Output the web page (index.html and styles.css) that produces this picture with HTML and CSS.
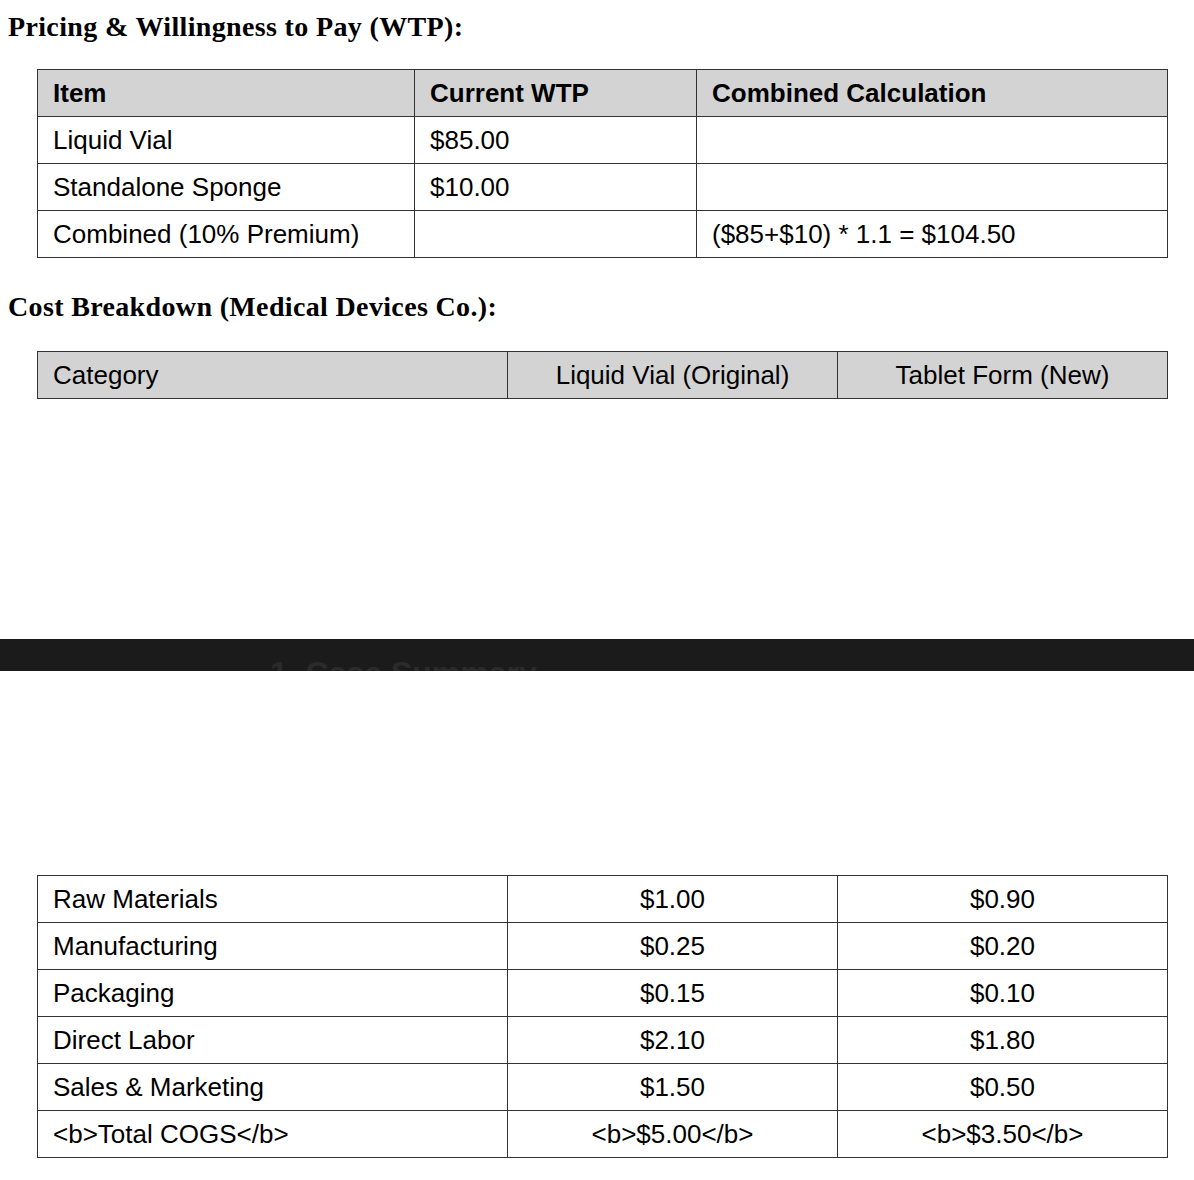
FILE: index.html
```html
<!DOCTYPE html>
<html>
<head>
<meta charset="utf-8">
<link rel="stylesheet" href="styles.css">
</head>
<body>
<div class="page">
  <h3 class="heading heading-first">Pricing &amp; Willingness to Pay (WTP):</h3>
  <table class="grid grid-wtp">
    <colgroup><col class="c-item"><col class="c-wtp"><col class="c-calc"></colgroup>
    <thead>
      <tr class="head bold"><th>Item</th><th>Current WTP</th><th>Combined Calculation</th></tr>
    </thead>
    <tbody>
      <tr><td>Liquid Vial</td><td>$85.00</td><td></td></tr>
      <tr><td>Standalone Sponge</td><td>$10.00</td><td></td></tr>
      <tr><td>Combined (10% Premium)</td><td></td><td>($85+$10) * 1.1 = $104.50</td></tr>
    </tbody>
  </table>

  <h3 class="heading heading-second">Cost Breakdown (Medical Devices Co.):</h3>
  <table class="grid grid-cost">
    <colgroup><col class="c-cat"><col class="c-val"><col class="c-val"></colgroup>
    <thead>
      <tr class="head"><th>Category</th><th class="center">Liquid Vial (Original)</th><th class="center">Tablet Form (New)</th></tr>
    </thead>
  </table>

  <div class="gap-one"></div>
  <div class="bar"><span class="bar-title">1. Case Summary</span></div>
  <div class="gap-two"></div>

  <table class="grid grid-cost">
    <colgroup><col class="c-cat"><col class="c-val"><col class="c-val"></colgroup>
    <tbody>
      <tr><td>Raw Materials</td><td class="center">$1.00</td><td class="center">$0.90</td></tr>
      <tr><td>Manufacturing</td><td class="center">$0.25</td><td class="center">$0.20</td></tr>
      <tr><td>Packaging</td><td class="center">$0.15</td><td class="center">$0.10</td></tr>
      <tr><td>Direct Labor</td><td class="center">$2.10</td><td class="center">$1.80</td></tr>
      <tr><td>Sales &amp; Marketing</td><td class="center">$1.50</td><td class="center">$0.50</td></tr>
      <tr><td>&lt;b&gt;Total COGS&lt;/b&gt;</td><td class="center">&lt;b&gt;$5.00&lt;/b&gt;</td><td class="center">&lt;b&gt;$3.50&lt;/b&gt;</td></tr>
    </tbody>
  </table>
</div>
</body>
</html>
```

FILE: styles.css
```css
html, body {
  margin: 0;
  padding: 0;
  background: #ffffff;
}

.page {
  padding: 0 0 20px 0;
}

.heading {
  font-family: "Liberation Serif", "Times New Roman", serif;
  font-weight: bold;
  font-size: 28px;
  letter-spacing: 0.35px;
  line-height: 32px;
  color: #000;
  margin: 0;
  padding-left: 8px;
}

.heading-first {
  padding-top: 11px;
  margin-bottom: 26px;
}

.heading-second {
  margin-top: 33px;
  margin-bottom: 28px;
}

.grid {
  border-collapse: collapse;
  width: 1130px;
  margin-left: 37px;
  table-layout: fixed;
  font-family: "Liberation Sans", Arial, sans-serif;
  font-size: 26px;
  color: #000;
}

.grid th,
.grid td {
  border: 1px solid #333;
  height: 47px;
  padding: 0 15px;
  text-align: left;
  font-weight: normal;
  line-height: 30px;
  box-sizing: border-box;
  vertical-align: middle;
}

.grid .head th {
  background: #d3d3d3;
}

.grid .bold th {
  font-weight: bold;
}

.grid .center {
  text-align: center;
}

.c-item { width: 377px; }
.c-wtp { width: 282px; }
.c-calc { width: 471px; }
.c-cat { width: 470px; }
.c-val { width: 330px; }

.gap-one {
  height: 240px;
}

.bar {
  height: 32px;
  background: #1b1b1b;
  overflow: hidden;
}

.bar-title {
  display: block;
  padding-left: 270px;
  padding-top: 18px;
  font-family: "Liberation Sans", Arial, sans-serif;
  font-weight: bold;
  font-size: 32px;
  line-height: 32px;
  color: #2b2b2b;
}

.gap-two {
  height: 204px;
}
```
